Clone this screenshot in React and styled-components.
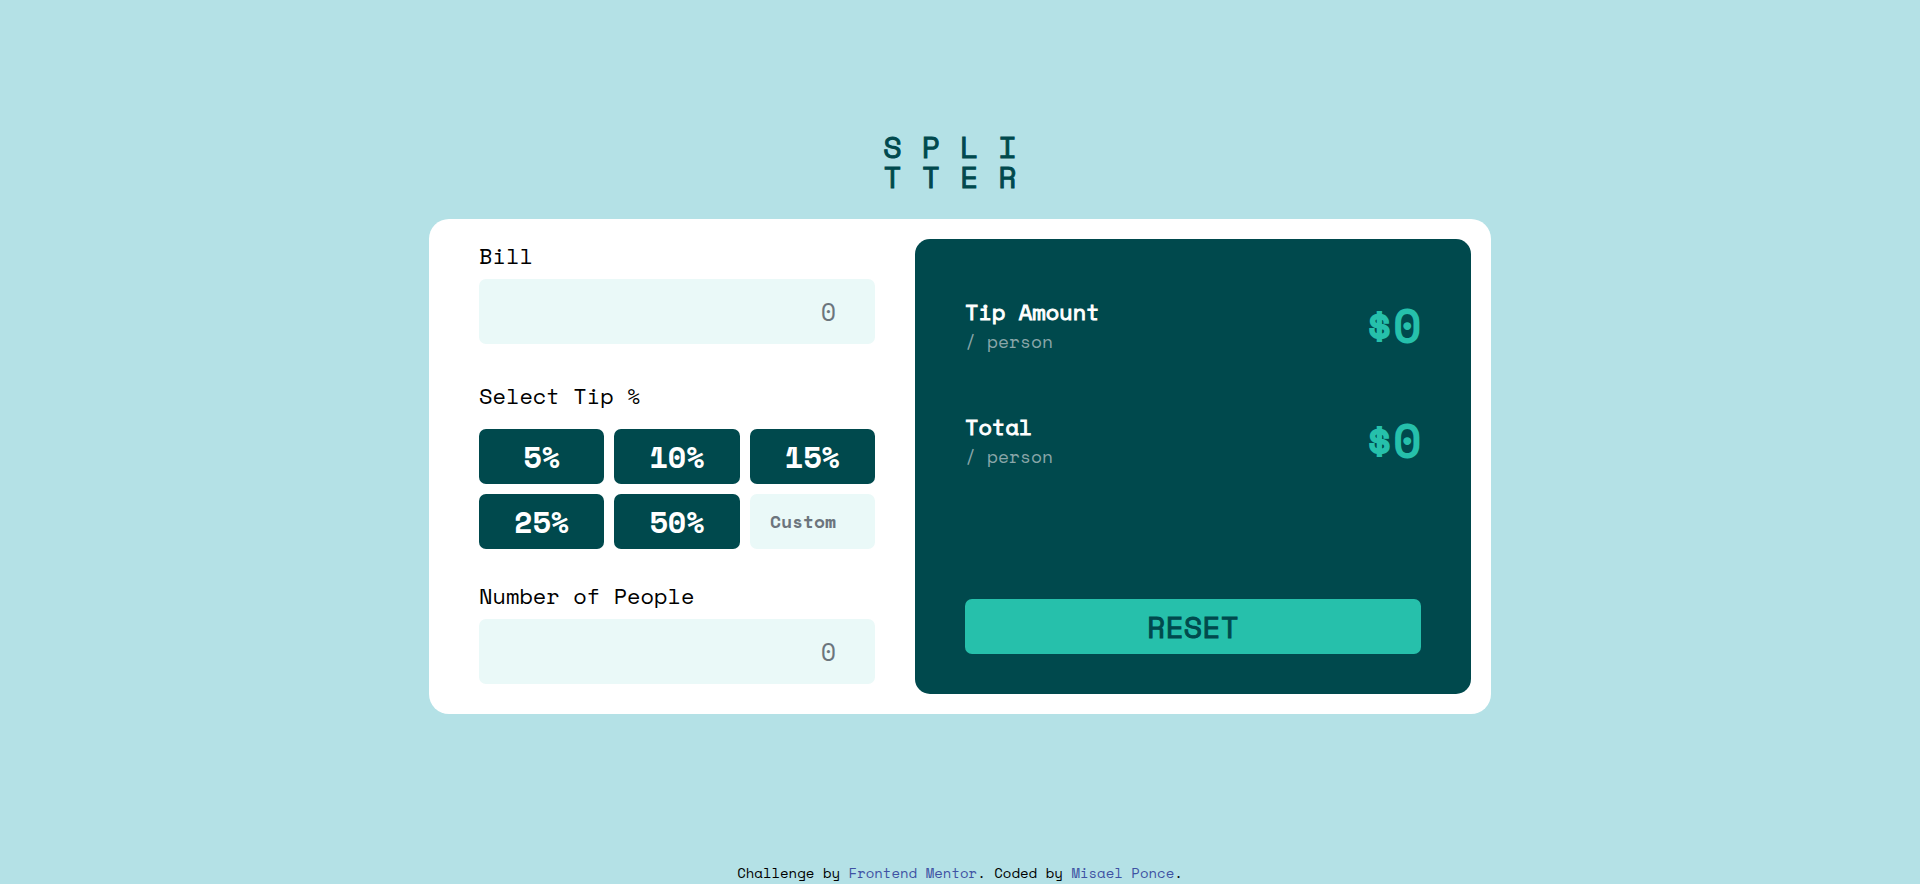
import React, { useState } from "react";
import styled, { createGlobalStyle, css } from "styled-components";

const GlobalStyle = createGlobalStyle`
  *, *::before, *::after { box-sizing: border-box; }
  body {
    margin: 0;
    background: #b4e1e6;
    color: #000;
    font-family: "Space Mono", "Liberation Mono", monospace;
  }
  input, button { font-family: inherit; }
`;

/* A weight between regular and bold, which the family itself lacks. */
const semiBold = css`
  font-weight: 400;
  -webkit-text-stroke: 1px;
`;

const Page = styled.div`
  display: flex;
  flex-direction: column;
  min-height: 100vh;
`;

const Main = styled.main`
  flex: 1;
  display: flex;
  flex-direction: column;
  align-items: center;
  justify-content: center;
  padding: 0 20px 18px;
`;

const Logo = styled.h1`
  ${semiBold}
  margin: 0 0 27px;
  color: #00494d;
  font-size: 30px;
  line-height: 30px;
  letter-spacing: 20px;
`;

const Card = styled.form`
  display: grid;
  grid-template-columns: 99fr 139fr;
  column-gap: 40px;
  width: 100%;
  max-width: 1062px;
  padding: 20px 20px 20px 50px;
  border-radius: 20px;
  background: #fff;

  @media (max-width: 860px) {
    grid-template-columns: 1fr;
    row-gap: 20px;
    padding: 20px;
  }
`;

const Fields = styled.div`
  min-width: 0;
  padding-bottom: 10px;
`;

const Label = styled.label`
  display: block;
  padding-bottom: 6px;
  font-size: 22px;
  line-height: 34px;
`;

const Input = styled.input`
  display: block;
  width: 100%;
  min-width: 0;
  height: ${({ $compact }) => ($compact ? "55px" : "65px")};
  padding: 0 39px 1px ${({ $compact }) => ($compact ? "10px" : "20px")};
  border: 0;
  border-radius: 7px;
  background: #eaf9f8;
  color: #00494d;
  font-size: ${({ $compact }) => ($compact ? "18px" : "25px")};
  font-weight: ${({ $compact }) => ($compact ? 700 : 400)};
  text-align: right;

  &::placeholder { color: #6c757d; opacity: 1; }
  &:focus { outline: 2px solid #26c0ab; }
`;

const TipGroup = styled.div`
  margin: 35px 0 30px;
`;

const TipGrid = styled.div`
  display: grid;
  grid-template-columns: repeat(3, minmax(0, 1fr));
  gap: 10px;
  padding-top: 10px;
`;

const Button = styled.button`
  height: 55px;
  padding: 0;
  border: 0;
  border-radius: 7px;
  background: #00494d;
  color: #fff;
  font-size: 30px;
  font-weight: 700;
  cursor: pointer;
`;

const ResetButton = styled(Button)`
  ${semiBold}
  margin-top: auto;
  background: #26c0ab;
  color: #00494d;
`;

const Results = styled.section`
  display: flex;
  flex-direction: column;
  gap: 57px;
  min-width: 0;
  padding: 57px 50px 40px;
  border-radius: 15px;
  background: #00494d;
`;

const ResultRow = styled.div`
  display: flex;
  align-items: center;
  justify-content: space-between;
`;

const ResultName = styled.h2`
  ${semiBold}
  margin: 0;
  color: #fff;
  font-size: 22px;
  line-height: 32px;
`;

const PerPerson = styled.p`
  margin: 0;
  color: #8aa6a9;
  font-size: 18px;
  line-height: 26px;
`;

const Amount = styled.output`
  color: #26c0ab;
  font-size: 45px;
  line-height: 56px;
  -webkit-text-stroke: 2px;
`;

const Footer = styled.footer`
  padding-bottom: 2px;
  font-size: 14px;
  line-height: 18px;
  text-align: center;
`;

const Link = styled.a`
  color: #3e52a3;
  text-decoration: none;
`;

const TIPS = [5, 10, 15, 25, 50];

const money = (value) => (value ? `$${value.toFixed(2)}` : "$0");

function Result({ name, value }) {
  return (
    <ResultRow>
      <div>
        <ResultName>{name}</ResultName>
        <PerPerson>/ person</PerPerson>
      </div>
      <Amount aria-label={name}>{money(value)}</Amount>
    </ResultRow>
  );
}

export default function App() {
  const [bill, setBill] = useState("");
  const [tip, setTip] = useState(0);
  const [custom, setCustom] = useState("");
  const [people, setPeople] = useState("");

  const count = Number(people) || 0;
  const total = Number(bill) || 0;
  const rate = (custom ? Number(custom) || 0 : tip) / 100;
  const tipShare = count > 0 ? (total * rate) / count : 0;
  const totalShare = count > 0 ? total / count + tipShare : 0;

  const reset = () => {
    setBill("");
    setTip(0);
    setCustom("");
    setPeople("");
  };

  return (
    <Page>
      <GlobalStyle />
      <Main>
        <Logo>
          SPLI
          <br />
          TTER
        </Logo>
        <Card onSubmit={(e) => e.preventDefault()}>
          <Fields>
            <Label htmlFor="bill">Bill</Label>
            <Input
              id="bill"
              inputMode="decimal"
              placeholder="0"
              value={bill}
              onChange={(e) => setBill(e.target.value)}
            />
            <TipGroup role="group" aria-labelledby="tip-label">
              <Label as="div" id="tip-label">Select Tip %</Label>
              <TipGrid>
                {TIPS.map((value) => (
                  <Button
                    key={value}
                    type="button"
                    onClick={() => {
                      setTip(value);
                      setCustom("");
                    }}
                  >
                    {value}%
                  </Button>
                ))}
                <Input
                  $compact
                  aria-label="Custom tip"
                  inputMode="decimal"
                  placeholder="Custom"
                  value={custom}
                  onChange={(e) => setCustom(e.target.value)}
                />
              </TipGrid>
            </TipGroup>
            <Label htmlFor="people">Number of People</Label>
            <Input
              id="people"
              inputMode="numeric"
              placeholder="0"
              value={people}
              onChange={(e) => setPeople(e.target.value)}
            />
          </Fields>
          <Results>
            <Result name="Tip Amount" value={tipShare} />
            <Result name="Total" value={totalShare} />
            <ResetButton type="button" onClick={reset}>RESET</ResetButton>
          </Results>
        </Card>
      </Main>
      <Footer>
        Challenge by <Link href="https://www.frontendmentor.io">Frontend Mentor</Link>. Coded by{" "}
        <Link href="#">Misael Ponce</Link>.
      </Footer>
    </Page>
  );
}
